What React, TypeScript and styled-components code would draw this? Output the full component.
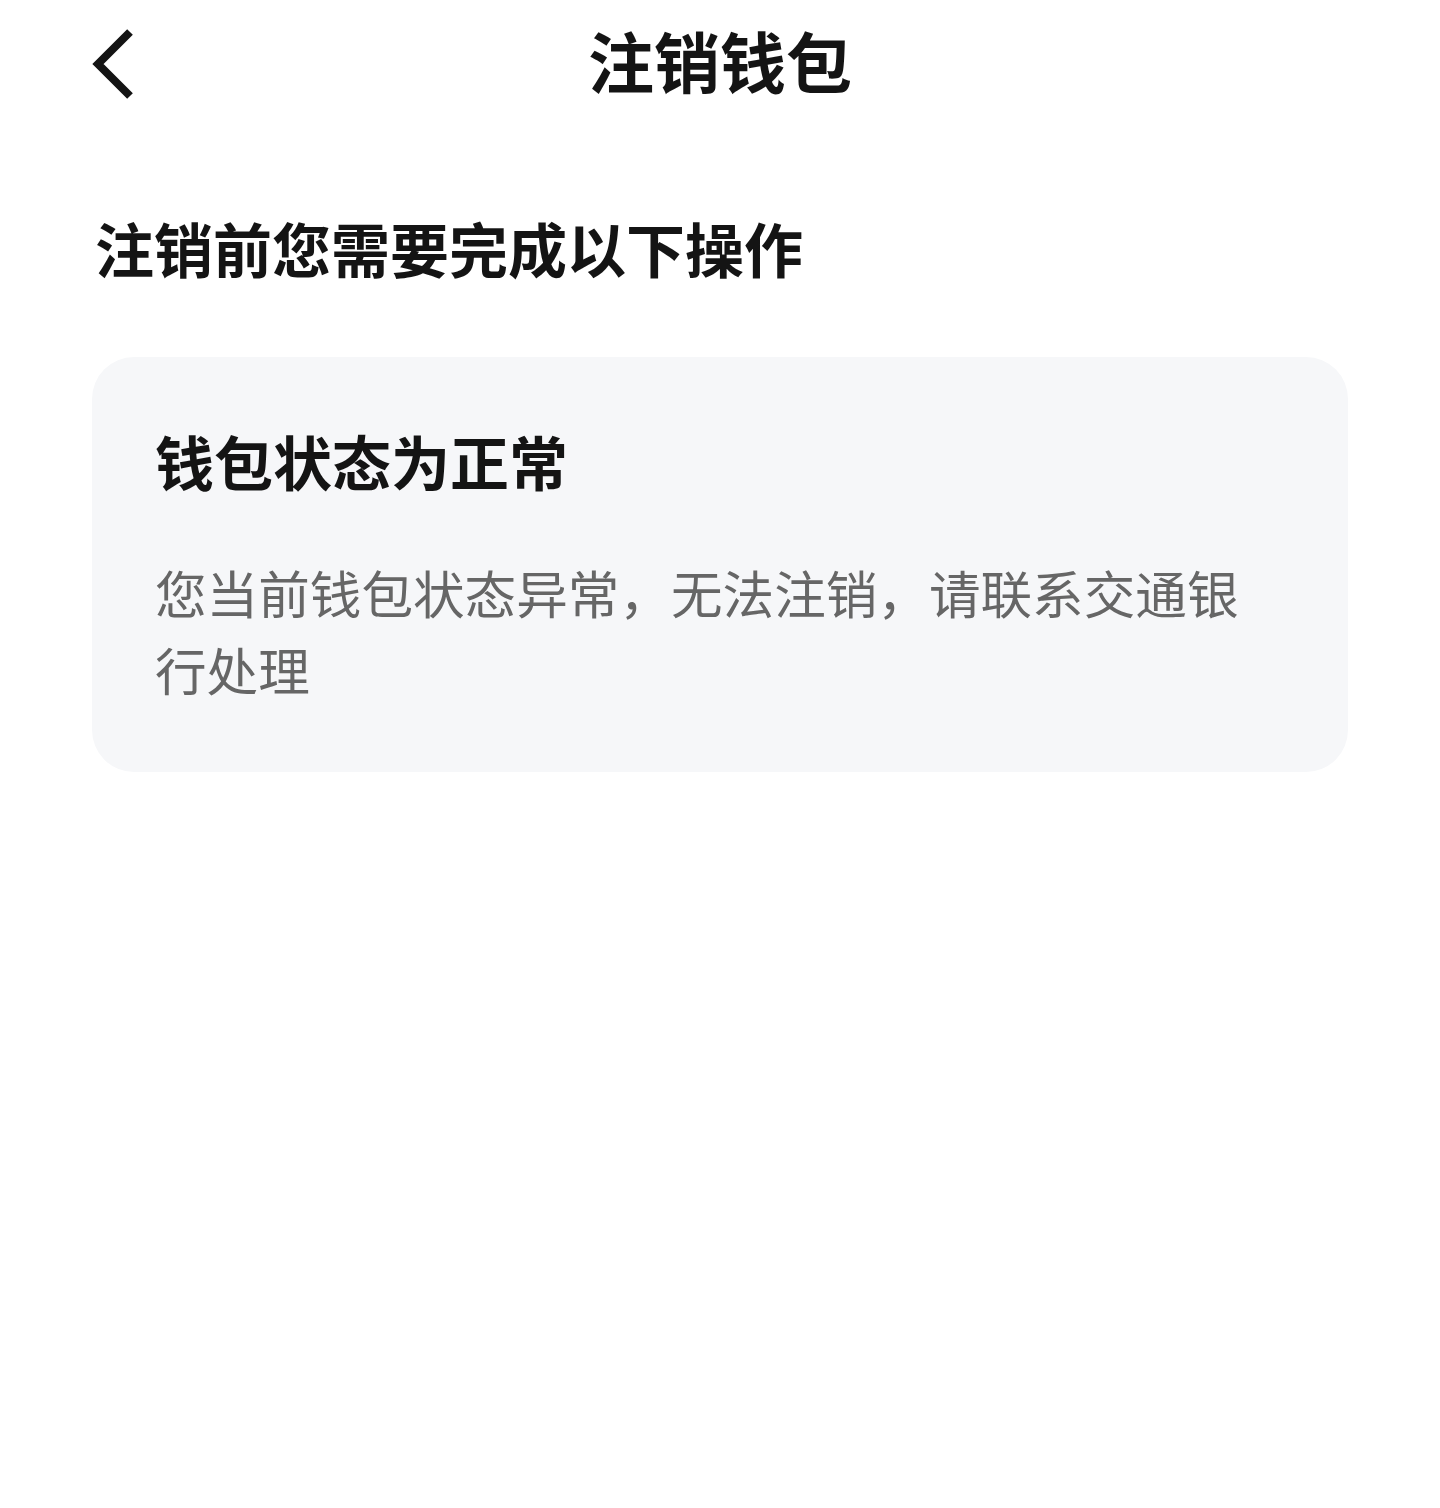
import React from 'react';
import styled, { createGlobalStyle } from 'styled-components';

const GlobalStyle = createGlobalStyle`
	html, body {
		margin: 0;
		padding: 0;
		background: #ffffff;
	}

	body {
		font-family: 'Noto Sans CJK SC', 'Noto Sans', sans-serif;
		color: #141414;
	}
`;

const Page = styled.div`
	width: 1440px;
	min-height: 1508px;
	box-sizing: border-box;
	padding: 0 92px;
	background: #ffffff;
`;

const NavBar = styled.header`
	position: relative;
	height: 126px;
	display: flex;
	align-items: flex-start;
	justify-content: center;
`;

const BackButton = styled.button`
	position: absolute;
	left: 0;
	top: 28px;
	width: 48px;
	height: 72px;
	padding: 0;
	border: none;
	background: none;
	cursor: pointer;
	display: flex;
	align-items: center;
`;

const NavTitle = styled.h1`
	margin: 0;
	font-size: 66px;
	line-height: 118px;
	font-weight: 700;
	color: #141414;
`;

const SectionHeading = styled.h2`
	margin: 82px 0 0 3px;
	font-size: 59px;
	line-height: 80px;
	font-weight: 700;
	color: #141414;
`;

const Card = styled.section`
	margin-top: 69px;
	padding: 64px 63px 65px;
	border-radius: 42px;
	background: #f6f7f9;
`;

const CardTitle = styled.h3`
	margin: 0;
	font-size: 59px;
	line-height: 80px;
	font-weight: 700;
	color: #141414;
`;

const CardText = styled.p`
	margin: 52px 0 0;
	font-size: 51.6px;
	line-height: 77px;
	font-weight: 400;
	color: #666666;
`;

const BackIcon = () => (
	<svg width="44" height="72" viewBox="0 0 44 72" fill="none">
		<path d="M38 4 L6 36 L38 68" stroke="#141414" strokeWidth="8" strokeLinecap="butt" strokeLinejoin="miter" />
	</svg>
);

const App = () => {
	return (
		<>
			<GlobalStyle />
			<Page>
				<NavBar>
					<BackButton aria-label="返回">
						<BackIcon />
					</BackButton>
					<NavTitle>注销钱包</NavTitle>
				</NavBar>
				<SectionHeading>注销前您需要完成以下操作</SectionHeading>
				<Card>
					<CardTitle>钱包状态为正常</CardTitle>
					<CardText>您当前钱包状态异常，无法注销，请联系交通银行处理</CardText>
				</Card>
			</Page>
		</>
	);
};

export default App;
